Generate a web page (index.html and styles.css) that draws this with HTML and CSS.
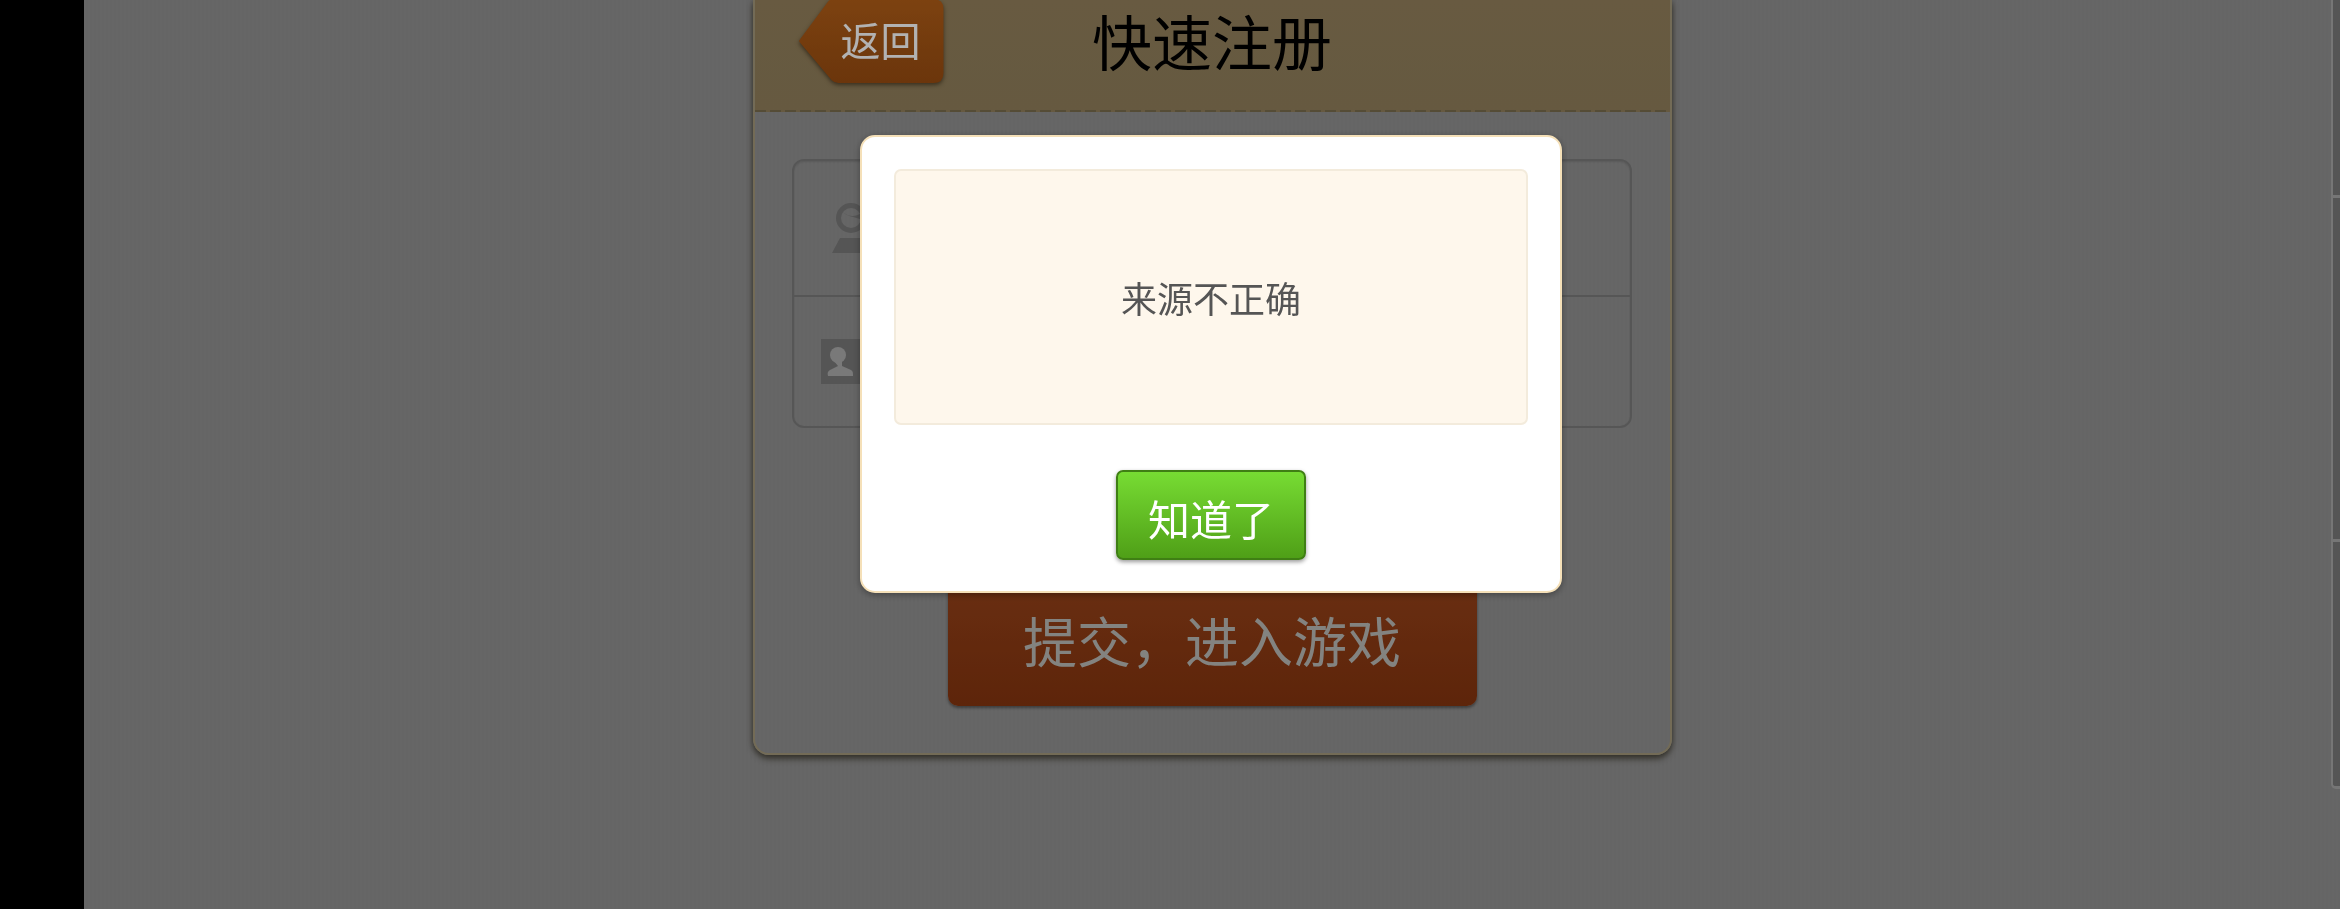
FILE: index.html
```html
<!DOCTYPE html>
<html lang="zh-CN">
<head>
<meta charset="utf-8">
<title>快速注册</title>
<link rel="stylesheet" href="styles.css">
</head>
<body>
<div class="app">
  <aside class="blackbar"></aside>
  <main class="stage">
    <section class="card">
      <header class="card-head">
        <a class="back"><span class="back-shape">返回</span></a>
        <h1 class="title">快速注册</h1>
      </header>
      <div class="card-body">
        <div class="fields">
          <div class="field">
            <svg class="icon-user" viewBox="0 0 48 50" width="48" height="50">
              <path d="M19 0a15 15 0 1 1 0 30a15 15 0 1 1 0-30zm0 5a10 10 0 1 0 0 20a10 10 0 1 0 0-20z"/>
              <path d="M11 9c5 5 13 5 18 1l1 7c-5-3-15-3-19-8z"/>
              <path d="M8 35h32l8 15H0z"/>
            </svg>
          </div>
          <div class="field field-second">
            <svg class="icon-id" viewBox="0 0 45 45" width="45" height="45">
              <rect width="45" height="45"/>
              <circle class="icon-id-fg" cx="17" cy="16" r="8"/>
              <path class="icon-id-fg" d="M13 22h8v5l9 4c2 1 2 3 2 6H7c-1-3 0-5 2-6l8-4z"/>
            </svg>
          </div>
        </div>
        <button class="submit" type="button">提交，进入游戏</button>
      </div>
    </section>
  </main>
  <div class="rail">
    <div class="rail-seg rail-a"></div>
    <div class="rail-seg rail-b"></div>
    <div class="rail-seg rail-c"></div>
  </div>
</div>
<div class="scrim">
  <div class="modal">
    <div class="modal-msg">来源不正确</div>
    <button class="ok" type="button">知道了</button>
  </div>
</div>
</body>
</html>
```
FILE: styles.css
```css
* { box-sizing: border-box; }
html, body { margin: 0; height: 909px; overflow: hidden; }
body { font-family: "Liberation Sans", "Noto Sans CJK SC", sans-serif; background: #000; }

.app { display: flex; height: 909px; overflow: hidden; }
.blackbar { width: 84px; flex: none; background: #000; }

.stage {
  flex: 1;
  display: flex;
  justify-content: center;
  align-items: flex-start;
  background: repeating-linear-gradient(90deg, #939393 0 2px, #919191 2px 4px);
}

.card {
  width: 919px;
  height: 755px;
  border: 2px solid #a59a7c;
  border-top: 0;
  border-radius: 0 0 16px 16px;
  box-shadow: 0 4px 6px rgba(40, 35, 20, .6), 0 0 5px rgba(40, 35, 20, .35);
  background: repeating-linear-gradient(90deg, #939393 0 2px, #919191 2px 4px);
}

.card-head {
  height: 112px;
  display: grid;
  grid-template-columns: 1fr auto 1fr;
  align-items: start;
  background:
    repeating-linear-gradient(90deg, #7a6d4e 0 11px, transparent 11px 15px) left bottom / 100% 2px no-repeat,
    linear-gradient(#95825d, #92805c);
}

.back {
  justify-self: start;
  margin: -1px 0 0 44px;
  filter: drop-shadow(0 2px 2px rgba(30, 15, 0, .55));
}
.back-shape {
  display: block;
  width: 145px;
  height: 84px;
  padding-left: 42px;
  font-size: 40px;
  line-height: 87px;
  color: #fff;
  background: linear-gradient(#b35f18, #9a4d11);
  clip-path: path("M1 41 L30 2 Q32 0 35 0 L135 0 Q145 0 145 10 L145 74 Q145 84 135 84 L40 84 Q36 84 33 81 L1 43 Q0 42 1 41 Z");
}

.title {
  grid-column: 2;
  margin: 0;
  font-size: 60px;
  font-weight: 400;
  line-height: 92px;
  color: #000;
}

.card-body {
  padding: 47px 38px 0;
  display: flex;
  flex-direction: column;
  align-items: center;
}

.fields {
  width: 840px;
  height: 269px;
  border: 2px solid #7c7c7c;
  border-radius: 12px;
  box-shadow: inset 0 1px 2px rgba(0, 0, 0, .12);
}
.field { height: 134px; display: flex; align-items: center; padding-left: 38px; }
.field-second { height: 131px; border-top: 2px solid #7c7c7c; padding-left: 27px; }

.icon-user { fill: #7a7a7a; }
.icon-id { fill: #7a7a7a; }
.icon-id-fg { fill: #aeaeae; }

.submit {
  margin-top: 151px;
  width: 529px;
  height: 127px;
  padding-bottom: 8px;
  border: 0;
  border-radius: 10px;
  font: inherit;
  font-size: 54px;
  color: #bcbcb8;
  background: linear-gradient(#98431a, #86350f);
  box-shadow: 0 2px 3px rgba(0, 0, 0, .4);
}

.rail {
  position: absolute;
  top: 0;
  right: 0;
  width: 9px;
  display: flex;
  flex-direction: column;
}
.rail-seg {
  background: #7a7a7a;
  border-left: 2px solid #aaa;
  border-bottom: 3px solid #aaa;
}
.rail-a { height: 198px; }
.rail-b { height: 344px; }
.rail-c { height: 247px; border-bottom-left-radius: 5px; }

.scrim {
  position: fixed;
  inset: 0;
  background: rgba(0, 0, 0, .3);
  padding: 135px 0 0 82px;
  display: flex;
  justify-content: center;
  align-items: flex-start;
}

.modal {
  width: 702px;
  height: 458px;
  padding: 32px 32px 0;
  background: #fff;
  border: 2px solid #f5e0b8;
  border-radius: 15px;
  box-shadow: 0 2px 7px rgba(0, 0, 0, .35);
  display: flex;
  flex-direction: column;
  align-items: center;
}

.modal-msg {
  width: 100%;
  height: 256px;
  display: flex;
  align-items: center;
  justify-content: center;
  font-size: 36px;
  color: #555;
  background: #fef7ec;
  border: 2px solid #f3ebdc;
  border-radius: 7px;
}

.ok {
  margin-top: 45px;
  width: 190px;
  height: 90px;
  padding-top: 5px;
  border: 2px solid #3f7f14;
  border-radius: 7px;
  font: inherit;
  font-size: 42px;
  color: #fff;
  background: linear-gradient(#77dc33, #4f9f17);
  box-shadow: 0 2px 4px rgba(0, 0, 0, .4);
}
```
